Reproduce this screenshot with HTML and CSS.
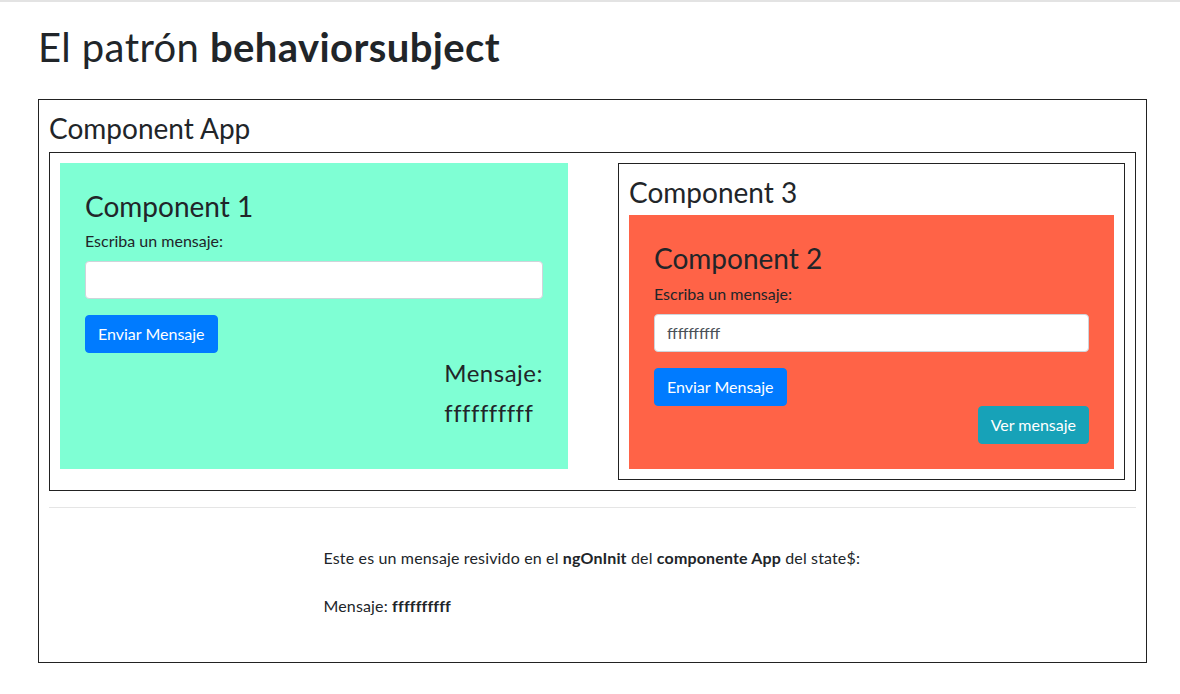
FILE: index.html
```html
<!DOCTYPE html>
<html lang="es">
<head>
<meta charset="utf-8">
<title>El patrón behaviorsubject</title>
<link rel="stylesheet" href="styles.css">
</head>
<body>
<div class="topline"></div>
<div class="page">
  <h1 class="title">El patrón <b>behaviorsubject</b></h1>
  <div class="app-box">
    <h3 class="h3">Component App</h3>
    <div class="inner-box">
      <div class="comp1">
        <h3 class="h3">Component 1</h3>
        <label class="label">Escriba un mensaje:</label>
        <input class="input" type="text" value="">
        <div class="actions">
          <button class="btn btn-primary">Enviar Mensaje</button>
        </div>
        <div class="msg-block">
          <h4 class="h4 msg-title">Mensaje:</h4>
          <h4 class="h4 msg-value">ffffffffff</h4>
        </div>
      </div>
      <div class="comp3">
        <h3 class="h3">Component 3</h3>
        <div class="comp2">
          <h3 class="h3">Component 2</h3>
          <label class="label">Escriba un mensaje:</label>
          <input class="input" type="text" value="ffffffffff">
          <div class="actions">
            <button class="btn btn-primary">Enviar Mensaje</button>
          </div>
          <div class="actions-right">
            <button class="btn btn-info">Ver mensaje</button>
          </div>
        </div>
      </div>
    </div>
    <hr class="divider">
    <div class="footer-msg">
      <p class="footer-line">Este es un mensaje resivido en el <b>ngOnInit</b> del <b>componente App</b> del state$:</p>
      <p class="footer-line last">Mensaje: <b>ffffffffff</b></p>
    </div>
  </div>
</div>
</body>
</html>
```
FILE: styles.css
```css
* { box-sizing: border-box; }
html, body {
  margin: 0;
  padding: 0;
  background: #fff;
}
body {
  font-family: "Lato", "Open Sans", "Liberation Sans", sans-serif;
  font-size: 16px;
  line-height: 1.5;
  color: #212529;
}
.topline {
  height: 2px;
  background: #e3e3e3;
}
.page {
  padding: 0 33px 0 38px;
}
.title {
  margin: 21px 0 28px;
  font-size: 40px;
  font-weight: 400;
  line-height: 1.2;
  letter-spacing: 0.4px;
}
.title b { font-weight: 700; }
.h3 {
  margin: 0 0 6px;
  padding-top: 2px;
  font-size: 28px;
  font-weight: 400;
  line-height: 1.2;
}
.h4 {
  margin: 0;
  font-size: 24px;
  font-weight: 400;
  line-height: 1.2;
  letter-spacing: 0.5px;
}
.app-box {
  border: 1px solid #222;
  padding: 10px;
}
.inner-box {
  border: 1px solid #222;
  padding: 10px;
  display: grid;
  grid-template-columns: 508fr 507fr;
  column-gap: 50px;
  align-items: start;
}
.comp1 {
  background: #7fffd4;
  padding: 25px;
  display: flex;
  flex-direction: column;
}
.comp3 {
  border: 1px solid #222;
  padding: 10px;
}
.comp2 {
  background: #ff6347;
  padding: 25px;
  display: flex;
  flex-direction: column;
}
.label {
  display: block;
  margin-bottom: 8px;
}
.input {
  display: block;
  width: 100%;
  height: 38px;
  padding: 6px 12px;
  font-family: inherit;
  font-size: 16px;
  line-height: 1.5;
  color: #495057;
  background: #fff;
  border: 1px solid #ced4da;
  border-radius: 4px;
  margin-bottom: 16px;
  outline: none;
}
.actions {
  display: flex;
}
.actions-right {
  display: flex;
  justify-content: flex-end;
}
.btn {
  font-family: inherit;
  font-size: 16px;
  line-height: 1.5;
  height: 38px;
  padding: 6px 12px;
  border: 1px solid transparent;
  border-radius: 4px;
  color: #fff;
  cursor: pointer;
}
.btn-primary {
  background: #007bff;
  border-color: #007bff;
}
.btn-info {
  background: #17a2b8;
  border-color: #17a2b8;
}
.msg-block {
  align-self: flex-end;
  margin-top: 6px;
}
.msg-title { margin-bottom: 11px; }
.msg-value { margin-bottom: 16px; }
.divider {
  margin: 16px 0;
  border: 0;
  border-top: 1px solid rgba(0,0,0,.1);
}
.footer-msg {
  width: 538px;
  margin: 0 auto;
  padding: 22px 0 34px;
  white-space: nowrap;
  letter-spacing: 0.15px;
}
.footer-line {
  margin: 0 0 24px;
}
.footer-line.last { margin-bottom: 0; }
.footer-line b { font-weight: 700; }
```
